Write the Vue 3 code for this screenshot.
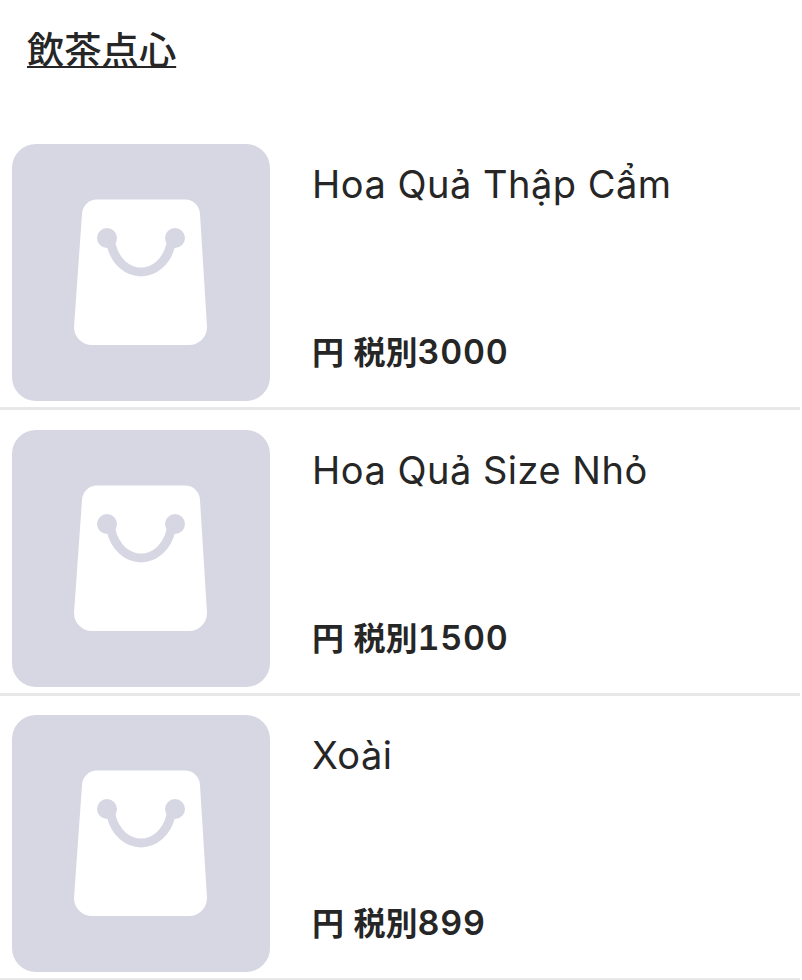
<template>
  <div class="page">
    <h2 class="section-title">飲茶点心</h2>

    <div class="product-list">
      <div v-for="item in items" :key="item.name" class="product-row">
        <div class="thumb">
          <svg class="bag" viewBox="0 0 258 258" width="258" height="258">
            <path
              d="M85 55.5H173A15 15 0 0 1 188 70L195 183A18 18 0 0 1 177 201H80A18 18 0 0 1 62 183L70 70A15 15 0 0 1 85 55.5Z"
              fill="#fff"
            />
            <circle cx="95" cy="94" r="10" fill="#d7d7e4" />
            <circle cx="163" cy="94" r="10" fill="#d7d7e4" />
            <path
              d="M99 100C103 118 116 128 129 128C142 128 155 118 159 100"
              fill="none"
              stroke="#d7d7e4"
              stroke-width="9"
            />
          </svg>
        </div>
        <div class="info">
          <div class="name">{{ item.name }}</div>
          <div class="price">円 税別<span class="amount">{{ item.price }}</span></div>
        </div>
      </div>
    </div>
  </div>
</template>

<script setup>
const items = [
  { name: 'Hoa Quả Thập Cẩm', price: '3000' },
  { name: 'Hoa Quả Size Nhỏ', price: '1500' },
  { name: 'Xoài', price: '899' }
]
</script>

<style>
html,
body {
  background: #fff;
  overflow: hidden;
}
</style>

<style scoped>
.page {
  height: 980px;
  overflow: hidden;
  background: #fff;
  color: #262626;
  font-family: Inter, "Noto Sans CJK JP", sans-serif;
}

.section-title {
  margin: 0;
  padding: 26px 27px 0;
  height: 144px;
  box-sizing: border-box;
  font-size: 37.3px;
  line-height: 50px;
  font-weight: 500;
  text-decoration: underline;
  text-decoration-thickness: 2px;
  text-underline-offset: 2px;
}

.product-row {
  position: relative;
  display: flex;
  height: 285.5px;
  box-sizing: border-box;
  padding-left: 12px;
}

.product-row::after {
  content: "";
  position: absolute;
  left: 0;
  right: 2px;
  top: 263px;
  height: 3px;
  background: #e8e8e8;
}

.thumb {
  width: 258px;
  height: 257px;
  flex-shrink: 0;
  border-radius: 24px;
  background: #d7d7e4;
  overflow: hidden;
}

.bag {
  display: block;
}

.info {
  flex: 1;
  height: 257px;
  margin-left: 42px;
  display: flex;
  flex-direction: column;
  justify-content: space-between;
}

.name {
  margin-top: 16px;
  font-size: 38px;
  line-height: 48px;
  letter-spacing: 0.5px;
}

.price {
  margin-bottom: 27px;
  font-size: 32px;
  line-height: 42px;
  font-weight: 700;
  word-spacing: 2px;
}

.amount {
  font-size: 34px;
  font-weight: 600;
  font-variant-numeric: tabular-nums;
  letter-spacing: 0.75px;
}
</style>
